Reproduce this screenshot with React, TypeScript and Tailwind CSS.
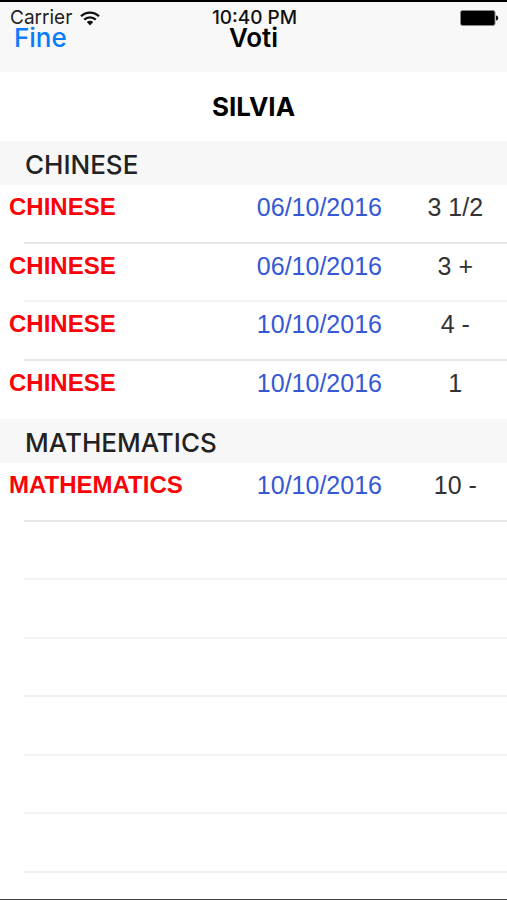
import React from 'react';

interface Grade {
  date: string;
  mark: string;
}

interface Subject {
  name: string;
  grades: Grade[];
}

const SUBJECTS: Subject[] = [
  {
    name: 'CHINESE',
    grades: [
      { date: '06/10/2016', mark: '3 1/2' },
      { date: '06/10/2016', mark: '3 +' },
      { date: '10/10/2016', mark: '4 -' },
      { date: '10/10/2016', mark: '1' },
    ],
  },
  {
    name: 'MATHEMATICS',
    grades: [{ date: '10/10/2016', mark: '10 -' }],
  },
];

const EMPTY_ROWS = 6;

const WifiIcon: React.FC = () => (
  <svg width="20" height="15" viewBox="0 0 20 15" fill="none" stroke="#111" strokeWidth="2.3" aria-label="Wi-Fi">
    <path d="M1 5.3C6 .3 14 .3 19 5.3" />
    <path d="M4.2 8.7c3.3-3.2 8.3-3.2 11.6 0" />
    <path d="M6.8 11.1c1.8-1.7 4.6-1.7 6.4 0L10 14.4z" fill="#111" stroke="none" />
  </svg>
);

const BatteryIcon: React.FC = () => (
  <svg width="39" height="16" viewBox="0 0 39 16" aria-label="Battery full">
    <rect x=".5" y=".5" width="34.5" height="15" rx="2" fill="#000" stroke="#888" />
    <path d="M36 5.5c3 .3 3 4.700 0 5z" fill="#111" />
  </svg>
);

const Header: React.FC = () => (
  <header className="h-[72px] border-t-2 border-black bg-[#f8f8f8] pt-1.5">
    <div className="grid grid-cols-3 items-center pr-2 pl-2.5 text-[19px] leading-5 text-[#222]">
      <div className="flex items-center gap-2">
        <span>Carrier</span>
        <WifiIcon />
      </div>
      <span className="text-center font-medium whitespace-nowrap text-[#111]">10:40 PM</span>
      <div className="flex justify-end">
        <BatteryIcon />
      </div>
    </div>
    <div className="grid grid-cols-3 items-center px-3.5 text-[26px] leading-5">
      <button type="button" className="justify-self-start font-medium text-[#087cfb]">Fine</button>
      <h1 className="text-center font-semibold text-black">Voti</h1>
    </div>
  </header>
);

const SubjectTable: React.FC<{ subject: Subject }> = ({ subject }) => (
  <section>
    <h3 className="bg-[#f7f7f7] px-[25px] pt-1 text-[26px] leading-10 font-medium text-[#222]">{subject.name}</h3>
    <table className="w-full table-fixed border-collapse font-['Liberation_Sans',Arial,sans-serif]">
      <tbody>
        {subject.grades.map((grade, idx) => (
          <tr
            key={idx}
            className="relative align-top after:absolute after:right-0 after:bottom-0 after:left-6 after:h-0.5 odd:h-[59px] odd:after:bg-[#e7e7e7] even:h-[58px] even:after:bg-[#f3f3f3] nth-4:after:hidden"
          >
            <td className="w-[46%] pt-1.5 pl-[9px] text-[24px] leading-8 font-bold text-[#fb0207]">{subject.name}</td>
            <td className="w-[34%] pt-1.5 text-center text-[25px] leading-8 text-[#3559d4]">{grade.date}</td>
            <td className="w-[20%] pt-1.5 pr-0.5 text-center text-[25px] leading-8 text-[#333]">{grade.mark}</td>
          </tr>
        ))}
      </tbody>
    </table>
  </section>
);

export default function App() {
  return (
    <div className="flex min-h-screen flex-col border-b border-[#444] bg-white font-[Inter,sans-serif]">
      <Header />
      <main className="flex-1">
        <h2 className="pt-[15px] pb-3.5 text-center text-[26px] leading-10 font-bold text-black">SILVIA</h2>
        {SUBJECTS.map((subject) => (
          <SubjectTable key={subject.name} subject={subject} />
        ))}
        <div aria-hidden="true">
          {Array.from({ length: EMPTY_ROWS }, (_, idx) => (
            <div key={idx} className="ml-6 border-b-2 border-[#f3f3f3] odd:h-[58px] even:h-[59px]" />
          ))}
        </div>
      </main>
    </div>
  );
}
